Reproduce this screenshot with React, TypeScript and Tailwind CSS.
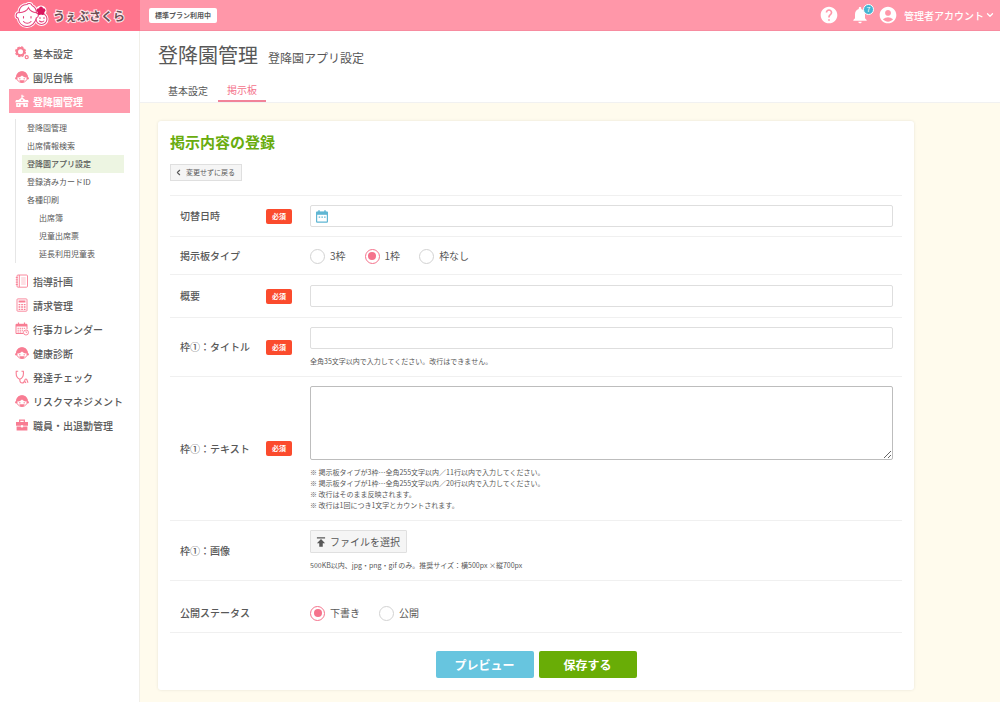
import type { ReactNode } from 'react';
import { MdAccountCircle, MdHelp, MdNotifications, MdPublish } from 'react-icons/md';
import { ChevronDown, ChevronLeft } from 'lucide-react';

type IconName = 'gear' | 'child' | 'school' | 'note' | 'calc' | 'event' | 'steth' | 'case';

const ICONS: Record<IconName, ReactNode> = {
  gear: (
    <>
      <circle cx="5.5" cy="5.8" r="3.6" fill="none" stroke="currentColor" strokeWidth="2.2" />
      <circle cx="5.5" cy="5.8" r="4.9" fill="none" stroke="currentColor" strokeWidth="1.2" strokeDasharray="2.4 1.45" />
      <circle cx="11.7" cy="11.2" r="1.5" fill="none" stroke="currentColor" strokeWidth="1.3" />
    </>
  ),
  child: (
    <>
      <circle cx="7" cy="7.2" r="5.4" fill="#fff" stroke="currentColor" strokeWidth=".9" />
      <path d="M1.2 7.8C.9 4.200 3.300 1.300 7 1.300s6.100 2.900 5.800 6.500C10.400 7.800 8.500 7 7 5.600 5.500 7 3.600 7.800 1.200 7.800z" fill="currentColor" />
      <ellipse cx="1.200" cy="8.300" rx="1" ry="1.300" fill="currentColor" />
      <ellipse cx="12.800" cy="8.300" rx="1" ry="1.300" fill="currentColor" />
      <path d="M4 8.800h1.500M8.500 8.800H10" stroke="currentColor" strokeWidth=".9" />
      <path d="M4.300 10.200h5.400c-.5 1.500-1.500 2.200-2.700 2.200s-2.200-.7-2.700-2.200z" fill="currentColor" />
    </>
  ),
  school: (
    <>
      <path d="M6.400.8h1.200v1h1.600v1H7.600v1l2.900 2.200H13l.8 2.200H.2L1 6h2.500l2.900-2.200z" fill="currentColor" />
      <path d="M1.200 8.900h11.600V13H8.300v-2.400H5.700V13H1.200z" fill="currentColor" />
      <path d="M6.200 5.500h1.600v1.600H6.200zM2.700 10.200H4v1.200H2.700zM10 10.200h1.300v1.200H10z" fill="#ff9bad" />
    </>
  ),
  note: (
    <g fill="none" stroke="currentColor" strokeWidth=".9">
      <rect x="2" y="1" width="10.500" height="12.200" rx="1" />
      <path d="M4.300 1v12M.8 3.500h2M.8 5.800h2M.8 8.200h2M.8 10.500h2" />
      <path d="M6.200 4h4.500M6.200 6h4.500M6.200 8h4.500M6.200 10h4.500" strokeWidth=".5" />
    </g>
  ),
  calc: (
    <>
      <rect x="2" y=".9" width="10" height="12.300" rx=".8" fill="none" stroke="currentColor" strokeWidth=".9" />
      <rect x="3.600" y="2.500" width="6.800" height="2" fill="currentColor" />
      <path d="M3.600 6.700h7M3.600 9h7M3.600 11.300h7" stroke="currentColor" strokeWidth="1.300" strokeDasharray="1.700 .9" />
    </>
  ),
  event: (
    <>
      <path d="M8.500 11.500H1V2.300h11v5" fill="none" stroke="currentColor" />
      <path d="M1 2h11v2.500H1z" fill="currentColor" />
      <path d="M3.500.5v2M9.500.5v2" stroke="currentColor" strokeWidth="1.200" />
      <path d="M2.500 6.300h8M2.500 8.200h6M2.500 10h5" stroke="currentColor" strokeDasharray="1.400 .7" />
      <circle cx="11" cy="10.500" r="2.500" fill="#fff" stroke="currentColor" strokeWidth=".9" />
      <path d="M11 9v1.500h1.200" fill="none" stroke="currentColor" strokeWidth=".7" />
    </>
  ),
  steth: (
    <g fill="none" stroke="currentColor" strokeWidth="1.100">
      <path d="M3.200 1.200H1.300C.8 4.800 1.500 8 4.800 9.200 8 8 8.800 4.800 8.300 1.200H6.500" />
      <path d="M4.800 9.200c0 2.500.8 3.800 2.400 3.800s2.200-1.200 2.400-2.600" />
      <path d="M9.800 10.400c.2-1.800 2-1.800 2.200-.3l1 2.600M11.200 12.800c-.8 0-1.400-.8-1.400-2" />
    </g>
  ),
  case: (
    <>
      <path d="M4.700 4V2.200h4.600V4" fill="none" stroke="currentColor" strokeWidth="1.300" />
      <path d="M1 4h12v3.700H1zM1.600 8.400h10.800v4.100H1.600z" fill="currentColor" />
      <path d="M5.900 7.200h2.200v2.200H5.900z" fill="#fff" />
    </>
  ),
};

type MenuItem = { label: string; icon: IconName; active?: boolean };

const MENU_TOP: MenuItem[] = [
  { label: '基本設定', icon: 'gear' },
  { label: '園児台帳', icon: 'child' },
  { label: '登降園管理', icon: 'school', active: true },
];

const MENU_BOTTOM: MenuItem[] = [
  { label: '指導計画', icon: 'note' },
  { label: '請求管理', icon: 'calc' },
  { label: '行事カレンダー', icon: 'event' },
  { label: '健康診断', icon: 'child' },
  { label: '発達チェック', icon: 'steth' },
  { label: 'リスクマネジメント', icon: 'child' },
  { label: '職員・出退勤管理', icon: 'case' },
];

const SUB_MENU = [
  { label: '登降園管理' },
  { label: '出席情報検索' },
  { label: '登降園アプリ設定', active: true },
  { label: '登録済みカードID' },
  { label: '各種印刷' },
  { label: '出席簿', nested: true },
  { label: '児童出席票', nested: true },
  { label: '延長利用児童表', nested: true },
];

const TEXT_HINTS = [
  '※ 掲示板タイプが3枠…全角255文字以内／11行以内で入力してください。',
  '※ 掲示板タイプが1枠…全角255文字以内／20行以内で入力してください。',
  '※ 改行はそのまま反映されます。',
  '※ 改行は1回につき1文字とカウントされます。',
];

const inputClass = 'block h-[22px] w-full rounded-[2px] border border-[#dedede] bg-white px-2 text-[10px] outline-none';

function Logo() {
  const head =
    'M5 10.500C5 5 9 2.500 13 2.500c.8-1.500 4.500-1.500 5 1 3 1.500 4.500 4 4.500 7.500 2.500 0 2.500 4.500-.2 5-1 5-4.800 8.500-9.300 8.500S5 21 4 16c-2.800-.5-2.500-5.500 1-5.500z';
  return (
    <svg width="35" height="28" viewBox="0 0 35 28" aria-hidden="true">
      <g fill="#fff" stroke="#fff" strokeWidth="3">
        <path d={head} />
        <circle cx="27.500" cy="17" r="5.500" />
        <circle cx="27" cy="9" r="4" />
      </g>
      <g fill="#fff" stroke="#e5427c" strokeWidth="1.100">
        <circle cx="27.500" cy="17" r="5.500" />
        <path d={head} />
        <path d="M5 10.800c4.500-.3 8-2 9.500-5 1.500 3 4.500 4.700 8 5" fill="none" />
      </g>
      <g fill="none" stroke="#e5427c" strokeWidth="1.100" strokeLinecap="round">
        <path d="M9.500 14.500V16M17 14.500V16M9.500 19.500c2 2.300 5.500 2.300 7.500 0M25.500 19c1.200 1.200 3.300 1.200 4.300 0" />
        <path d="M26 15.500v1M30 15.500v1" />
      </g>
      <g fill="#d9185f">
        <circle cx="27" cy="6.500" r="2" />
        <circle cx="29.400" cy="8.300" r="2" />
        <circle cx="28.500" cy="11.100" r="2" />
        <circle cx="25.500" cy="11.100" r="2" />
        <circle cx="24.600" cy="8.300" r="2" />
        <circle cx="27" cy="9" r="1.800" />
      </g>
    </svg>
  );
}

function MenuList({ items }: { items: MenuItem[] }) {
  return (
    <ul>
      {items.map((item) => (
        <li key={item.label}>
          <a
            href="#"
            className={`flex h-6 items-center gap-1 pl-[6px] text-[10px] ${
              item.active ? 'bg-[#ff9bad] font-bold text-white' : 'font-medium text-[#585858]'
            }`}
          >
            <svg
              width="14"
              height="14"
              viewBox="0 0 14 14"
              aria-hidden="true"
              className={item.active ? 'text-white' : 'text-[#f87d93]'}
            >
              {ICONS[item.icon]}
            </svg>
            {item.label}
          </a>
        </li>
      ))}
    </ul>
  );
}

function Sidebar() {
  return (
    <nav className="w-[140px] shrink-0 border-r border-[#f1efe8] bg-white pt-[10px] pr-[9px] pl-[9px]">
      <MenuList items={MENU_TOP} />
      <ul className="my-[6px] ml-[6px] border-l border-[#e6e6e6] pr-[6px] pl-[6px]">
        {SUB_MENU.map((item) => (
          <li key={item.label}>
            <a
              href="#"
              className={`flex h-[18px] items-center text-[8px] ${item.nested ? 'pl-[17px]' : 'pl-[5px]'} ${
                item.active ? 'bg-[#edf5e2] font-medium' : ''
              }`}
            >
              {item.label}
            </a>
          </li>
        ))}
      </ul>
      <MenuList items={MENU_BOTTOM} />
    </nav>
  );
}

function TopBar() {
  return (
    <header className="flex h-[31px] text-white">
      <a href="#" className="flex w-[140px] shrink-0 items-center gap-1 bg-[#ff758d] pl-[14px]">
        <Logo />
        <span className="text-[12px] font-bold text-[#6b4f56] [paint-order:stroke] [-webkit-text-stroke:2px_#ffe9ed]">
          うぇぶさくら
        </span>
      </a>
      <div className="flex flex-1 items-center justify-between border-b border-[#f78ca0] bg-[#ff97a9] pr-[5px] pl-[9px]">
        <span className="flex h-[15px] items-center rounded-[2px] bg-white px-[6px] text-[7px] font-bold text-[#585858]">
          標準プラン利用中
        </span>
        <div className="flex items-center">
          <button type="button" aria-label="ヘルプ" className="mr-[11px]">
            <MdHelp size={20} />
          </button>
          <button type="button" aria-label="お知らせ" className="relative mr-2">
            <MdNotifications size={20} />
            <span className="absolute -top-px right-[-4px] flex size-[11px] items-center justify-center rounded-full border border-white bg-[#46b4d2] text-[7px] leading-none">
              7
            </span>
          </button>
          <button type="button" className="flex items-center text-[10px] font-medium">
            <MdAccountCircle size={20} className="mr-[6px]" />
            管理者アカウント
            <ChevronDown size={10} strokeWidth={3} className="ml-px" />
          </button>
        </div>
      </div>
    </header>
  );
}

function PageHeader() {
  return (
    <div className="border-b border-[#f1f1f1] bg-white pt-3 pl-[18px]">
      <div className="flex items-baseline gap-[10px]">
        <h1 className="text-[20px] leading-6">登降園管理</h1>
        <p className="text-[12px] leading-6">登降園アプリ設定</p>
      </div>
      <div className="mt-2 flex text-[10px]">
        <a href="#" className="flex h-6 items-center px-[10px]">
          基本設定
        </a>
        <a href="#" className="flex h-6 items-center border-b-2 border-[#f18399] px-[9px] text-[#f4738c]">
          掲示板
        </a>
      </div>
    </div>
  );
}

type RowProps = { label: string; htmlFor?: string; required?: boolean; padding?: string; children: ReactNode };

function Row({ label, htmlFor, required, padding = 'py-[9px]', children }: RowProps) {
  return (
    <div className={`flex items-center border-b border-[#f0f0f0] pr-[9px] pl-[10px] ${padding}`}>
      <div className="flex w-[130px] shrink-0 items-center">
        <label htmlFor={htmlFor} className="w-[86px] text-[10px] leading-4 font-medium">
          {label}
        </label>
        {required && (
          <span className="flex h-[15px] w-[26px] items-center justify-center rounded-[2px] bg-[#fb4b2d] text-[7px] font-bold text-white">
            必須
          </span>
        )}
      </div>
      <div className="min-w-0 flex-1">{children}</div>
    </div>
  );
}

function Radios({ name, options, selected }: { name: string; options: string[]; selected: string }) {
  return (
    <div className="flex gap-[19px]">
      {options.map((o) => (
        <label key={o} className="flex items-center gap-[5px] text-[10px] leading-4">
          <input
            type="radio"
            name={name}
            defaultChecked={o === selected}
            className="grid size-[15px] appearance-none place-content-center rounded-full border border-[#d2d2d2] bg-white before:size-2 before:rounded-full checked:border-[#f5738c] checked:before:bg-[#f5738c]"
          />
          {o}
        </label>
      ))}
    </div>
  );
}

function Hint({ children }: { children: ReactNode }) {
  return <p className="text-[7px] leading-[11px]">{children}</p>;
}

function BoardForm() {
  return (
    <form className="max-w-[756px] rounded-[3px] bg-white px-3 pt-[11px] pb-3 shadow-[0_0_3px_rgba(0,0,0,0.1)]">
      <h2 className="text-[15px] leading-5 font-bold text-[#69ac0e]">掲示内容の登録</h2>
      <button
        type="button"
        className="mt-3 flex h-[17px] items-center gap-[3px] border border-[#dfdfdf] bg-[#f5f5f5] pr-[6px] pl-[3px] text-[7px]"
      >
        <ChevronLeft size={9} strokeWidth={3} />
        変更せずに戻る
      </button>

      <div className="mt-[14px] border-t border-[#f0f0f0]">
        <Row label="切替日時" htmlFor="date" required>
          <div className="flex h-[22px] items-center rounded-[2px] border border-[#dedede] pl-[5px]">
            <svg width="12" height="13" viewBox="0 0 12 13" className="text-[#5fb6d3]" aria-hidden="true">
              <rect x=".6" y="2" width="10.800" height="10.200" rx=".6" fill="none" stroke="currentColor" strokeWidth="1.200" />
              <path d="M.5 1.800h11v3H.5z" fill="currentColor" />
              <path d="M3 .3v2M9 .3v2" stroke="currentColor" strokeWidth="1.500" />
              <path d="M2.700 7.200h6.900" stroke="currentColor" strokeWidth="1.200" strokeDasharray="1.500 1.200" />
            </svg>
            <input id="date" type="text" className="h-full min-w-0 flex-1 px-2 text-[10px] outline-none" />
          </div>
        </Row>
        <Row label="掲示板タイプ" padding="pt-[11px] pb-[10px]">
          <Radios name="type" options={['3枠', '1枠', '枠なし']} selected="1枠" />
        </Row>
        <Row label="概要" htmlFor="summary" required padding="py-[10px]">
          <input id="summary" type="text" className={inputClass} />
        </Row>
        <Row label="枠①：タイトル" htmlFor="title" required>
          <input id="title" type="text" className={`${inputClass} mb-[7px]`} />
          <Hint>全角35文字以内で入力してください。改行はできません。</Hint>
        </Row>
        <Row label="枠①：テキスト" htmlFor="text" required>
          <textarea
            id="text"
            className="mb-[7px] block h-[74px] w-full rounded-[2px] border border-[#bdbdbd] bg-white px-2 text-[10px] outline-none"
          />
          {TEXT_HINTS.map((h) => (
            <Hint key={h}>{h}</Hint>
          ))}
        </Row>
        <Row label="枠①：画像" htmlFor="image">
          <label className="mb-[7px] flex h-[23px] w-fit cursor-pointer items-center gap-[2px] rounded-[1px] border border-[#e0e0e0] bg-[#f5f5f5] pr-[6px] pl-[3px] text-[10px]">
            <MdPublish size={14} />
            ファイルを選択
            <input id="image" type="file" accept=".jpg,.png,.gif" className="hidden" />
          </label>
          <Hint>500KB以内、jpg・png・gif のみ。推奨サイズ：横500px ×縦700px</Hint>
        </Row>
        <Row label="公開ステータス" padding="pt-6 pb-[11px]">
          <Radios name="status" options={['下書き', '公開']} selected="下書き" />
        </Row>
      </div>

      <div className="mt-[18px] flex justify-center gap-[5px] text-[12px] font-bold text-white">
        <button type="button" className="h-[27px] w-[98px] rounded-[2px] bg-[#67c5df]">
          プレビュー
        </button>
        <button type="submit" className="h-[27px] w-[98px] rounded-[2px] bg-[#69ad06]">
          保存する
        </button>
      </div>
    </form>
  );
}

export default function App() {
  return (
    <div className="flex min-h-screen flex-col bg-white font-['Noto_Sans_CJK_JP',sans-serif] text-[#585858]">
      <TopBar />
      <div className="flex flex-1">
        <Sidebar />
        <main className="min-w-0 flex-1 bg-[#fffbed]">
          <PageHeader />
          <div className="px-[18px] pt-[18px] pb-3">
            <BoardForm />
          </div>
        </main>
      </div>
    </div>
  );
}
